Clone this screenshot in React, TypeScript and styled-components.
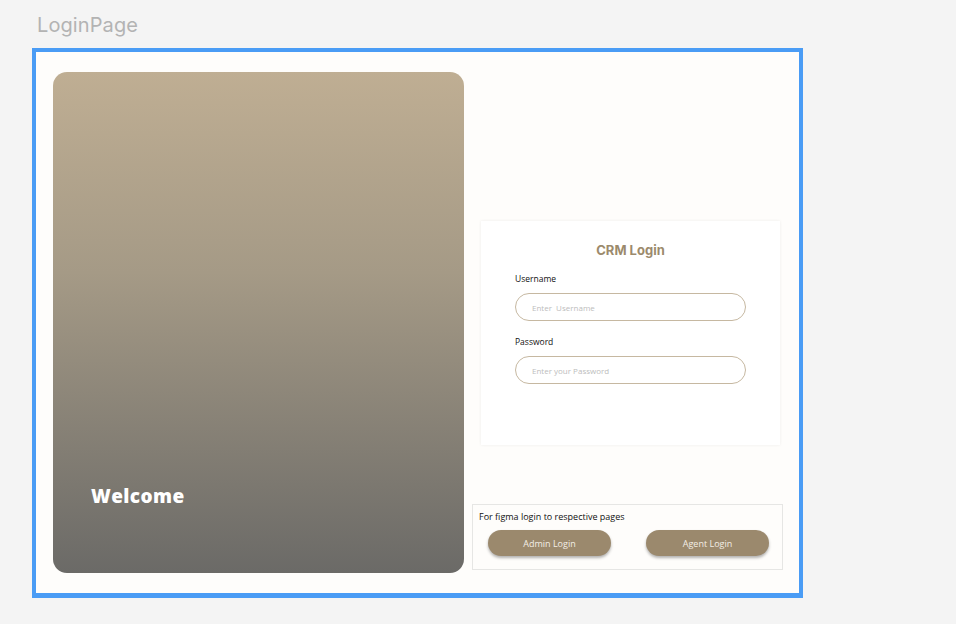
import React from "react";
import styled, { createGlobalStyle } from "styled-components";

const Global = createGlobalStyle`
  html, body { margin: 0; padding: 0; background: #f4f4f4; }
  body { font-family: "Open Sans", "Liberation Sans", sans-serif; }
  * { box-sizing: border-box; }
`;

const Page = styled.div`
  width: 956px;
  height: 624px;
  padding: 0 0 0 32px;
  display: flex;
  flex-direction: column;
`;

const PageTitle = styled.div`
  height: 48px;
  padding: 12px 0 0 5px;
  font-family: Inter, "Liberation Sans", sans-serif;
  font-size: 20px;
  line-height: 26px;
  color: #b3b3b3;
  letter-spacing: 0.1px;
`;

const Frame = styled.div`
  width: 771px;
  height: 550px;
  border: 4px solid #4a9cf5;
  border-bottom-width: 5px;
  background: #fefdfb;
  display: flex;
  padding: 20px 0 20px 17px;
`;

const Hero = styled.div`
  width: 411px;
  flex: none;
  border-radius: 14px;
  background: linear-gradient(180deg, #bfae93 0%, #a59a86 40%, #6b6a67 100%);
  display: flex;
  align-items: flex-end;
  padding: 0 0 64px 38px;
`;

const Welcome = styled.div`
  font-family: "Open Sans", sans-serif;
  font-weight: 800;
  font-size: 19px;
  color: #ffffff;
  letter-spacing: 0.4px;
`;

const RightCol = styled.div`
  flex: 1;
  display: flex;
  flex-direction: column;
  padding-top: 149px;
`;

const Card = styled.div`
  margin-left: 17px;
  width: 299px;
  height: 224px;
  background: #ffffff;
  box-shadow: 0 0 3px rgba(0, 0, 0, 0.07);
  display: flex;
  flex-direction: column;
  padding: 20px 34px 0 34px;
`;

const CardTitle = styled.div`
  text-align: center;
  font-family: Inter, "Liberation Sans", sans-serif;
  font-weight: 700;
  font-size: 13px;
  line-height: 18px;
  color: #9c8a6c;
  margin-bottom: 14px;
`;

const Label = styled.div`
  font-size: 8.5px;
  line-height: 12px;
  color: #111;
  margin-bottom: 8px;
`;

const Input = styled.input`
  width: 231px;
  height: 28px;
  border-radius: 14px;
  border: 1px solid #c6b8a1;
  background: #fff;
  padding: 0 0 0 16px;
  font-family: "Open Sans", sans-serif;
  font-size: 8px;
  color: #333;
  outline: none;
  margin-bottom: 15px;
  &::placeholder { color: #bdbdbd; }
`;

const QuickBox = styled.div`
  margin-top: auto;
  margin-bottom: 3px;
  margin-left: 8px;
  width: 311px;
  height: 66px;
  border: 1px solid #e6e6e4;
  padding: 6px 0 0 6px;
`;

const QuickText = styled.div`
  font-size: 9px;
  line-height: 12px;
  color: #111;
  margin-bottom: 7px;
`;

const ButtonRow = styled.div`
  display: flex;
  gap: 35px;
  padding-left: 9px;
`;

const Btn = styled.button`
  width: 123px;
  height: 26px;
  border-radius: 13px;
  border: none;
  background: #9b896d;
  color: #f3eee6;
  font-family: "Open Sans", sans-serif;
  font-size: 9px;
  box-shadow: 0 2px 3px rgba(0, 0, 0, 0.3);
  cursor: pointer;
`;

export default function App() {
  return (
    <>
      <Global />
      <Page>
        <PageTitle>LoginPage</PageTitle>
        <Frame>
          <Hero>
            <Welcome>Welcome</Welcome>
          </Hero>
          <RightCol>
            <Card>
              <CardTitle>CRM Login</CardTitle>
              <Label>Username</Label>
              <Input placeholder="Enter  Username" />
              <Label>Password</Label>
              <Input type="password" placeholder="Enter your Password" />
            </Card>
            <QuickBox>
              <QuickText>For figma login to respective pages</QuickText>
              <ButtonRow>
                <Btn>Admin Login</Btn>
                <Btn>Agent Login</Btn>
              </ButtonRow>
            </QuickBox>
          </RightCol>
        </Frame>
      </Page>
    </>
  );
}
